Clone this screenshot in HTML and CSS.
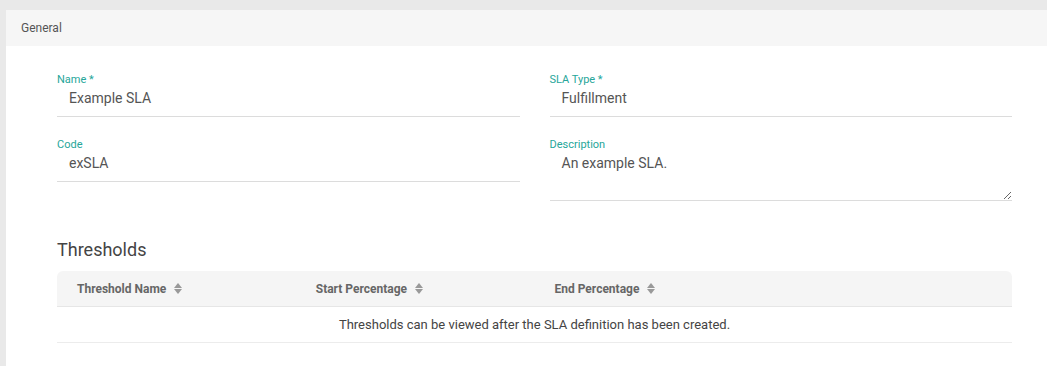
FILE: index.html
```html
<!DOCTYPE html>
<html lang="en">
<head>
    <meta charset="UTF-8">
    <meta name="viewport" content="width=device-width, initial-scale=1.0">
    <title>SLA Definition</title>
    <link rel="stylesheet" href="styles.css">
</head>
<body>
    <div class="card">
        <div class="card-header">General</div>
        <div class="card-body">
            <div class="form-grid">
                <div class="field">
                    <label for="name">Name *</label>
                    <input type="text" id="name" value="Example SLA">
                </div>
                <div class="field">
                    <label for="type">SLA Type *</label>
                    <input type="text" id="type" value="Fulfillment">
                </div>
                <div class="field">
                    <label for="code">Code</label>
                    <input type="text" id="code" value="exSLA">
                </div>
                <div class="field">
                    <label for="desc">Description</label>
                    <textarea id="desc">An example SLA.</textarea>
                </div>
            </div>

            <h2 class="section-title">Thresholds</h2>
            <table class="data-table">
                <thead>
                    <tr>
                        <th>Threshold Name <span class="sort"></span></th>
                        <th>Start Percentage <span class="sort"></span></th>
                        <th>End Percentage <span class="sort"></span></th>
                        <th></th>
                    </tr>
                </thead>
                <tbody>
                    <tr>
                        <td colspan="4" class="empty">Thresholds can be viewed after the SLA definition has been created.</td>
                    </tr>
                </tbody>
            </table>
        </div>
    </div>
</body>
</html>
```

FILE: styles.css
```css
body {
    margin: 0;
    padding: 10px 0 0 6px;
    background-color: #e9e9e9;
    font-family: Roboto, "Liberation Sans", Arial, sans-serif;
}
.card {
    background-color: white;
    min-height: 356px;
}
.card-header {
    height: 36px;
    line-height: 36px;
    padding: 0 15px;
    font-size: 12px;
    color: #555;
    background-color: #f6f6f6;
}
.card-body {
    padding: 27px 35px 20px 51px;
}
.form-grid {
    display: grid;
    grid-template-columns: 1fr 1fr;
    column-gap: 30px;
    row-gap: 21px;
}
.field label {
    display: block;
    font-size: 11px;
    line-height: 13px;
    color: #26a69a;
}
.field input,
.field textarea {
    display: block;
    width: 100%;
    box-sizing: border-box;
    margin: 1px 0 0;
    padding: 1px 12px 8px;
    border: none;
    border-bottom: 1px solid #dcdcdc;
    font-family: inherit;
    font-size: 14px;
    line-height: 20px;
    color: #555;
    background: transparent;
    outline: none;
}
.field textarea {
    height: 49px;
    resize: vertical;
}
.section-title {
    margin: 38px 0 10px;
    font-size: 18px;
    line-height: 22px;
    font-weight: 400;
    color: #444;
}
.data-table {
    width: 100%;
    border-collapse: separate;
    border-spacing: 0;
    table-layout: fixed;
}
.data-table th {
    height: 35px;
    padding: 0 20px;
    text-align: left;
    font-size: 12px;
    font-weight: 700;
    color: #666;
    background-color: #f5f5f5;
    border-bottom: 1px solid #e6e6e6;
    white-space: nowrap;
}
.data-table th:first-child {
    border-top-left-radius: 6px;
}
.data-table th:last-child {
    border-top-right-radius: 6px;
}
.sort {
    display: inline-block;
    position: relative;
    width: 9px;
    height: 11px;
    margin-left: 5px;
    vertical-align: -1px;
}
.sort::before,
.sort::after {
    content: "";
    position: absolute;
    left: 0;
    border-left: 4.5px solid transparent;
    border-right: 4.5px solid transparent;
}
.sort::before {
    top: 0;
    border-bottom: 5px solid #999;
}
.sort::after {
    bottom: 0;
    border-top: 5px solid #999;
}
.data-table td {
    height: 33px;
    font-size: 13px;
    color: #444;
    border-bottom: 1px solid #ececec;
}
.empty {
    text-align: center;
}
```
